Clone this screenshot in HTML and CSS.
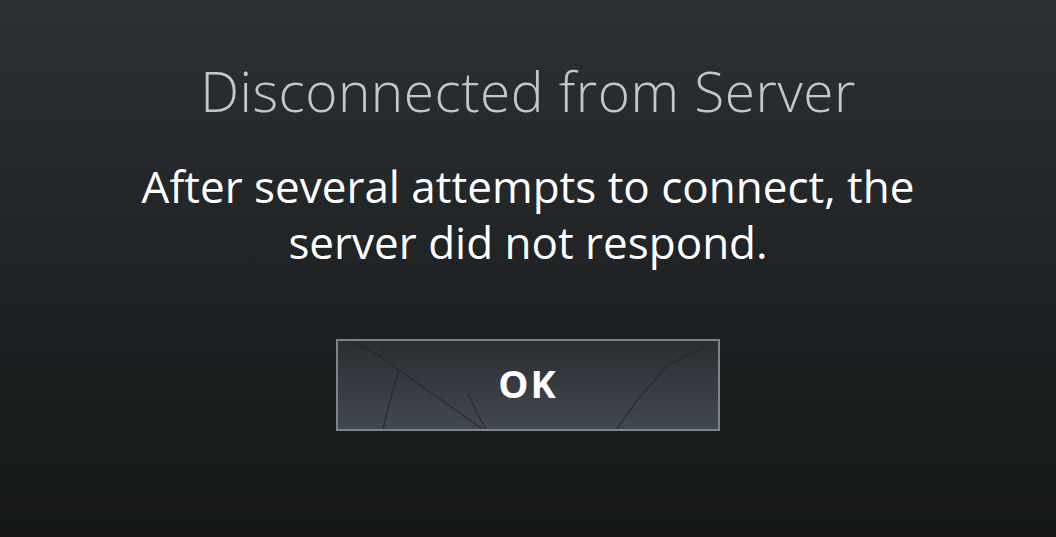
FILE: index.html
```html
<!DOCTYPE html>
<html>
<head>
	<meta charset="utf-8" />
	<link rel="stylesheet" href="styles.css">
</head>
<body>
<div id="dialog">
	<h1 id="title">Disconnected from Server</h1>
	<p id="message">After several attempts to connect, the<br>server did not respond.</p>
	<button type="button" id="ok_button">
		<!-- scratched texture on the button face -->
		<svg class="cracks" width="382" height="90" viewBox="0 0 382 90">
			<g stroke="#23272c" stroke-width="1.5" fill="none" opacity="0.65">
				<path d="M18 2 L43 16 L61 29 L150 92"/>
				<path d="M61 29 L52 60 L44 92"/>
				<path d="M43 16 L45 6"/>
				<path d="M150 92 L138 70 L130 52"/>
				<path d="M330 24 L300 58 L276 92"/>
				<path d="M330 24 L366 6"/>
			</g>
		</svg>
		<span class="label">OK</span>
	</button>
</div>
</body>
</html>
```

FILE: styles.css
```css
html, body {
	margin: 0;
	height: 100%;
}

body {
	background: linear-gradient(to bottom, #2b3032 0%, #222628 40%, #1a1d1e 75%, #151718 100%);
	font-family: "Open Sans", "Noto Sans", sans-serif;
	overflow: hidden;
}

#dialog {
	display: flex;
	flex-direction: column;
	align-items: center;
	text-align: center;
	padding-top: 51px;
}

#title {
	margin: 0;
	font-weight: 300;
	font-size: 55px;
	line-height: 80px;
	color: #c4c7c6;
	letter-spacing: 0.5px;
}

#message {
	margin: 27px 0 0 0;
	font-size: 44px;
	line-height: 56px;
	color: #ffffff;
}

#ok_button {
	position: relative;
	margin-top: 69px;
	width: 384px;
	height: 92px;
	padding: 0 0 4px 0;
	border: 2px solid #7f8487;
	background: linear-gradient(to bottom, #2a2e33 0%, #353a40 45%, #42484f 100%);
	cursor: pointer;
	overflow: hidden;
}

#ok_button:hover {
	background: linear-gradient(to bottom, #30353a 0%, #3d434a 45%, #4b525a 100%);
}

.cracks {
	position: absolute;
	left: 0;
	top: 0;
}

.label {
	position: relative;
	font-family: "Open Sans", "Noto Sans", sans-serif;
	font-weight: 700;
	font-size: 38px;
	letter-spacing: 2px;
	color: #ffffff;
}
```
